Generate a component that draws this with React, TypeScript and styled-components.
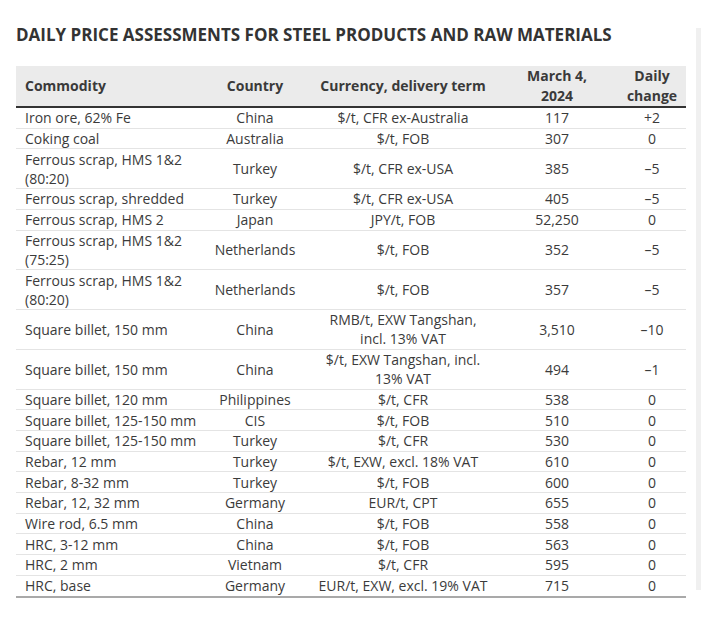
import React from "react";
import styled, { createGlobalStyle } from "styled-components";

const GlobalStyle = createGlobalStyle`
  html, body { margin: 0; padding: 0; background: #ffffff; }
  body { font-family: "Open Sans", "DejaVu Sans", sans-serif; color: #3a3a3a; }
`;

const Page = styled.div`
  display: flex;
  width: 701px;
  height: 638px;
  box-sizing: border-box;
  padding-left: 16px;
`;

const Main = styled.div`
  width: 670px;
  display: flex;
  flex-direction: column;
`;

const SideStrip = styled.div`
  margin-left: 10px;
  margin-top: 28px;
  width: 5px;
  height: 562px;
  background: #f0f0f0;
`;

const Title = styled.h1`
  margin: 24px 0 0 0;
  font-size: 17px;
  line-height: 22px;
  font-weight: 700;
  color: #333;
  white-space: nowrap;
`;

const Table = styled.table`
  margin-top: 20px;
  width: 670px;
  border-collapse: collapse;
  table-layout: fixed;
  font-size: 14px;
  border-bottom: 2px solid #a9a9a9;
`;

const HeadRow = styled.tr`
  background: #ebebeb;
  border-bottom: 2px solid #333;
`;

const Th = styled.th<{ $align?: string }>`
  font-weight: 700;
  color: #3a3a3a;
  text-align: ${(p) => p.$align || "center"};
  padding: 0 0 0 ${(p) => (p.$align === "left" ? "9px" : "0")};
  height: 38px;
  line-height: 20px;
  vertical-align: middle;
  white-space: nowrap;
`;

const Row = styled.tr`
  border-bottom: 1px solid #e4e4e4;
  &:last-child { border-bottom: none; }
`;

const Td = styled.td<{ $align?: string }>`
  text-align: ${(p) => p.$align || "center"};
  padding: 0.3px 0 0.3px ${(p) => (p.$align === "left" ? "9px" : "0")};
  line-height: 19.1px;
  vertical-align: middle;
  white-space: nowrap;
  color: #3b3b3b;
`;

type R = [string, string, string, string, string];

const rows: R[] = [
  ["Iron ore, 62% Fe", "China", "$/t, CFR ex-Australia", "117", "+2"],
  ["Coking coal", "Australia", "$/t, FOB", "307", "0"],
  ["Ferrous scrap, HMS 1&2\n(80:20)", "Turkey", "$/t, CFR ex-USA", "385", "–5"],
  ["Ferrous scrap, shredded", "Turkey", "$/t, CFR ex-USA", "405", "–5"],
  ["Ferrous scrap, HMS 2", "Japan", "JPY/t, FOB", "52,250", "0"],
  ["Ferrous scrap, HMS 1&2\n(75:25)", "Netherlands", "$/t, FOB", "352", "–5"],
  ["Ferrous scrap, HMS 1&2\n(80:20)", "Netherlands", "$/t, FOB", "357", "–5"],
  ["Square billet, 150 mm", "China", "RMB/t, EXW Tangshan,\nincl. 13% VAT", "3,510", "–10"],
  ["Square billet, 150 mm", "China", "$/t, EXW Tangshan, incl.\n13% VAT", "494", "–1"],
  ["Square billet, 120 mm", "Philippines", "$/t, CFR", "538", "0"],
  ["Square billet, 125-150 mm", "CIS", "$/t, FOB", "510", "0"],
  ["Square billet, 125-150 mm", "Turkey", "$/t, CFR", "530", "0"],
  ["Rebar, 12 mm", "Turkey", "$/t, EXW, excl. 18% VAT", "610", "0"],
  ["Rebar, 8-32 mm", "Turkey", "$/t, FOB", "600", "0"],
  ["Rebar, 12, 32 mm", "Germany", "EUR/t, CPT", "655", "0"],
  ["Wire rod, 6.5 mm", "China", "$/t, FOB", "558", "0"],
  ["HRC, 3-12 mm", "China", "$/t, FOB", "563", "0"],
  ["HRC, 2 mm", "Vietnam", "$/t, CFR", "595", "0"],
  ["HRC, base", "Germany", "EUR/t, EXW, excl. 19% VAT", "715", "0"],
];

const Lines: React.FC<{ text: string }> = ({ text }) => {
  const parts = text.split("\n");
  return (
    <>
      {parts.map((p, i) => (
        <React.Fragment key={i}>
          {i > 0 && <br />}
          {p}
        </React.Fragment>
      ))}
    </>
  );
};

export default function App() {
  return (
    <>
      <GlobalStyle />
      <Page>
        <Main>
          <Title>DAILY PRICE ASSESSMENTS FOR STEEL PRODUCTS AND RAW MATERIALS</Title>
          <Table>
            <colgroup>
              <col style={{ width: 184 }} />
              <col style={{ width: 110 }} />
              <col style={{ width: 186 }} />
              <col style={{ width: 122 }} />
              <col style={{ width: 68 }} />
            </colgroup>
            <thead>
              <HeadRow>
                <Th $align="left">Commodity</Th>
                <Th>Country</Th>
                <Th>Currency, delivery term</Th>
                <Th>
                  March 4,
                  <br />
                  2024
                </Th>
                <Th>
                  Daily
                  <br />
                  change
                </Th>
              </HeadRow>
            </thead>
            <tbody>
              {rows.map((r, i) => (
                <Row key={i}>
                  <Td $align="left">
                    <Lines text={r[0]} />
                  </Td>
                  <Td>{r[1]}</Td>
                  <Td>
                    <Lines text={r[2]} />
                  </Td>
                  <Td>{r[3]}</Td>
                  <Td>{r[4]}</Td>
                </Row>
              ))}
            </tbody>
          </Table>
        </Main>
        <SideStrip />
      </Page>
    </>
  );
}
